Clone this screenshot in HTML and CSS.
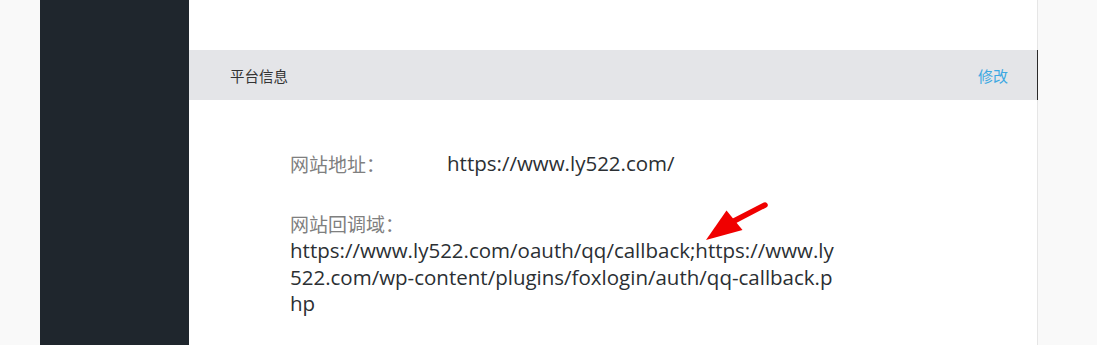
FILE: index.html
```html
<!DOCTYPE html>
<html lang="zh-CN">
<head>
<meta charset="utf-8">
<title>平台信息</title>
<link rel="stylesheet" href="styles.css">
</head>
<body>
<div class="page">
  <div class="gutter"></div>
  <aside class="sidebar"></aside>
  <main class="main">
    <div class="top-space"></div>
    <div class="panel-head">
      <span class="panel-title">平台信息</span>
      <a class="panel-edit">修改</a>
    </div>
    <div class="panel-body">
      <div class="row row-inline">
        <span class="label">网站地址：</span>
        <span class="value">https://www.ly522.com/</span>
      </div>
      <div class="row row-block">
        <div class="label">网站回调域：</div>
        <div class="value value-wrap">https://www.ly522.com/oauth/qq/callback;https://www.ly522.com/wp-content/plugins/foxlogin/auth/qq-callback.php</div>
      </div>
      <svg class="arrow" width="70" height="46" viewBox="0 0 70 46">
        <line x1="63" y1="5" x2="32" y2="21" stroke="#f00000" stroke-width="5.5" stroke-linecap="round"/>
        <polygon points="24.5,10.5 40.5,30 4,40" fill="#f00000"/>
      </svg>
    </div>
  </main>
  <div class="rest"></div>
</div>
</body>
</html>
```

FILE: styles.css
```css
html, body {
  margin: 0;
  padding: 0;
  background: #f9f9f9;
}
.page {
  display: flex;
  height: 345px;
  overflow: hidden;
  font-family: "Open Sans", "Noto Sans CJK SC", sans-serif;
}
.gutter {
  width: 40px;
  flex: none;
  background: #f9f9f9;
}
.sidebar {
  width: 149px;
  flex: none;
  background: #1f262d;
}
.main {
  width: 848px;
  flex: none;
  background: #ffffff;
  border-right: 1px solid #e6e6e6;
  position: relative;
}
.rest {
  flex: 1;
  background: #f9f9f9;
}
.top-space {
  height: 50px;
}
.panel-head {
  height: 50px;
  margin-right: -1px;
  background: #e4e5e8;
  border-right: 1px solid #2a2a2a;
  display: flex;
  align-items: center;
  justify-content: space-between;
  padding: 0 29px 0 41px;
}
.panel-title {
  font-family: "Noto Sans CJK SC", sans-serif;
  font-size: 14.5px;
  color: #333333;
}
.panel-edit {
  font-family: "Noto Sans CJK SC", sans-serif;
  font-size: 15px;
  color: #3ca8e2;
}
.panel-body {
  position: relative;
  padding: 50px 0 0 101px;
  font-size: 20.5px;
  line-height: 27px;
}
.row-inline {
  display: flex;
}
.row-inline .label {
  width: 157px;
  flex: none;
}
.row-block {
  margin-top: 33px;
}
.label {
  font-family: "Noto Sans CJK SC", sans-serif;
  font-size: 19px;
  color: #7f7f7f;
}
.value {
  color: #2b2f33;
}
.value-wrap {
  width: 552px;
  word-break: break-all;
  line-height: 26.5px;
}
.arrow {
  position: absolute;
  left: 513px;
  top: 100px;
}
```
